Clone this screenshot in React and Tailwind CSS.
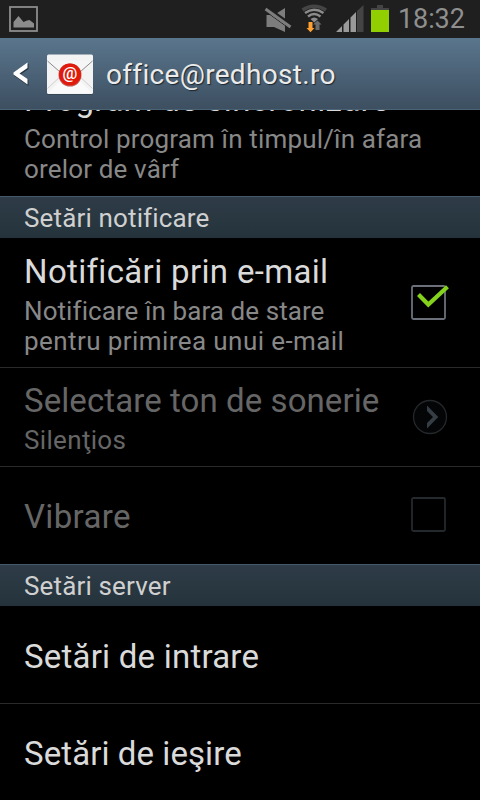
import React from "react";

const DISABLED = "text-[#666666]";
const ENABLED = "text-[#dadada]";

function StatusBar() {
  return (
    <div className="flex h-[38px] shrink-0 items-start bg-[#1f1f1f]">
      <svg className="mt-[6px] ml-[9px] shrink-0" width="29" height="26" viewBox="0 0 29 26">
        <rect x="1" y="1" width="27" height="24" fill="#1f1f1f" stroke="#8c8c8c" strokeWidth="1.800" />
        <path d="M4.500 21.500V16L9.500 10L14.500 16L18 14.500L20.500 14L25 17.500V21.500Z" fill="#8c8c8c" />
      </svg>
      <svg className="ml-auto shrink-0" width="132" height="38" viewBox="264 0 132 38">
        <path d="M266.500 15H274L285 8V32L274 27H266.500Z" fill="#7d7d7d" />
        <path d="M265 7L291 25.700" stroke="#1f1f1f" strokeWidth="4.500" />
        <path d="M265.500 11.300L290.500 29.300" stroke="#1f1f1f" strokeWidth="1" />
        <path d="M265.500 9L290.500 27" stroke="#7d7d7d" strokeWidth="3" />
        <path d="M302.500 10Q314 2.500 326 10" stroke="#454545" strokeWidth="3.500" fill="none" />
        <path d="M305 13Q314 6.500 323.500 13" stroke="#8c8c8c" strokeWidth="2.400" fill="none" />
        <path d="M308 16.500Q314 11.500 320.500 16.500" stroke="#8c8c8c" strokeWidth="2.400" fill="none" />
        <path d="M310.500 19Q314 16 318 19L314.300 22.500Z" fill="#8c8c8c" />
        <path d="M308.500 22H312.500V28H314.500L310.500 32.300L306.500 28H308.500Z" fill="#ffa030" />
        <path d="M315.500 30V24.500H313L317.500 20.500L321.500 24.500H319.500V30Z" fill="#6a6a6a" />
        <path d="M336 32L342 26V32ZM343.500 32V24.500L349 19V32ZM350.500 32V17.500L356 12V32Z" fill="#9a9a9a" />
        <path d="M357 32V11L363.500 5V32Z" fill="#444444" />
        <rect x="377" y="5" width="6" height="3" fill="#444444" />
        <rect x="371" y="8" width="18" height="2" fill="#444444" />
        <rect x="371" y="10" width="18" height="22" fill="#92cf00" />
      </svg>
      <span className="mt-[4px] mr-[16px] w-[68px] pl-[2px] text-[27px] leading-[30px] tracking-[-0.1px] whitespace-nowrap text-[#8f8f8f]">18:32</span>
    </div>
  );
}

function Header() {
  return (
    <div className="relative z-10 flex h-[72px] shrink-0 items-start border-b border-[#4b6474] bg-linear-to-b from-[#5a768d] to-[#3d4f61]">
      <svg className="shrink-0" width="106" height="71" viewBox="0 38 106 71">
        <path d="M28.500 63.500V69L20.500 74.500L28.500 80V86L14.500 76V73.500Z" fill="#26323e" />
        <path d="M27.500 62.500V68L19.500 73.500L27.500 79V84.500L13.500 74.500V72.500Z" fill="#ffffff" />
        <rect x="47" y="55" width="46" height="40" rx="1.500" fill="#33414e" opacity=".7" />
        <rect x="47" y="54.500" width="46" height="39.500" rx="1.500" fill="#f3f3f3" />
        <path d="M48 93L65 76H75L92 93Z" fill="#fafafa" />
        <path d="M47.500 88.500L62 75M92.500 88.500L78 75" stroke="#cfcfcf" strokeWidth="1" />
        <path d="M47.500 61L64 75.500Q70 80 76 75.500L92.500 61" stroke="#8c8c8c" strokeWidth="1" fill="#f6f6f6" />
        <circle cx="70" cy="75" r="11.500" fill="#aa1c12" opacity=".7" />
        <circle cx="70" cy="74.500" r="11" fill="#e01b0c" />
        <text x="69.900" y="78.700" textAnchor="middle" fontFamily="Roboto, sans-serif" fontSize="16.500" fontWeight="500" fill="#ffffff">@</text>
      </svg>
      <span className="mt-[19px] text-[28px] leading-[36px] tracking-[0.32px] whitespace-nowrap text-[#ebebeb] [text-shadow:1px_1px_1px_#1c2731]">office@redhost.ro</span>
    </div>
  );
}

function Section({ children }) {
  return (
    <div className="h-[42px] shrink-0 border-t border-[#46596a] bg-linear-to-b from-[#2f3c48] to-[#24333b] pt-[6px] pl-6 text-[26px] leading-[30px] tracking-[0.15px] whitespace-nowrap text-[#d0d0d0]">
      {children}
    </div>
  );
}

function Title({ children, className = "" }) {
  return <div className={`text-[33px] leading-[38px] whitespace-nowrap ${className}`}>{children}</div>;
}

function Summary({ children, className = "" }) {
  return <div className={`mt-[5px] text-[26px] leading-[30px] whitespace-nowrap ${className}`}>{children}</div>;
}

function Checkbox({ checked }) {
  return (
    <svg className="shrink-0" width="42" height="38" viewBox="0 0 42 38">
      <rect x="2" y="3" width="33" height="33" rx="1.500" fill="none" stroke={checked ? "#6b707a" : "#24292d"} strokeWidth="1.800" />
      {checked && <path d="M8.500 11.500L18.300 21.500L37.500 3.800" fill="none" stroke="#84d21c" strokeWidth="4.200" />}
    </svg>
  );
}

function Arrow() {
  return (
    <svg className="shrink-0" width="36" height="36" viewBox="0 0 36 36">
      <circle cx="18" cy="18" r="16.500" fill="#040507" stroke="#25282b" strokeWidth="1.300" />
      <path d="M15 6.500L26.300 18L15 29.500V24L21 18L15 12Z" fill="#353d45" />
    </svg>
  );
}

export default function App() {
  return (
    <div className="flex h-[800px] w-[480px] flex-col overflow-hidden bg-black font-['Roboto',sans-serif]">
      <StatusBar />
      <Header />
      <div className="flex min-h-0 flex-1 flex-col overflow-hidden">
        <div className="-mt-[29px] h-[115px] shrink-0 pl-6">
          <div className={ENABLED}><Title className="tracking-[0.32px]">Program de sincronizare</Title></div>
          <div className="text-[#888888]"><Summary className="tracking-[0.16px]">Control program în timpul/în afara<br />orelor de vârf</Summary></div>
        </div>
        <Section>Setări notificare</Section>
        <div className="flex h-[130px] shrink-0 border-b border-[#2a2a2a] pt-[15px] pl-6">
          <div className="w-[386px]">
            <div className={ENABLED}><Title className="tracking-[0.34px]">Notificări prin e-mail</Title></div>
            <div className="text-[#888888]">
              <Summary className="tracking-[0.08px]">Notificare în bara de stare<br /><span className="tracking-[0.42px]">pentru primirea unui e-mail</span></Summary>
            </div>
          </div>
          <div className="pt-[30px]"><Checkbox checked /></div>
        </div>
        <div className="flex h-[99px] shrink-0 border-b border-[#2a2a2a] pt-[14px] pl-6">
          <div className={`w-[388px] ${DISABLED}`}>
            <Title className="tracking-[0.08px]">Selectare ton de sonerie</Title>
            <Summary className="tracking-[0.33px]">Silenţios</Summary>
          </div>
          <div className="pt-[17px]"><Arrow /></div>
        </div>
        <div className="flex h-[97px] shrink-0 pl-6">
          <div className={`w-[386px] pt-[31px] ${DISABLED}`}><Title className="tracking-[0.35px]">Vibrare</Title></div>
          <div className="pt-[28px]"><Checkbox /></div>
        </div>
        <Section>Setări server</Section>
        <div className={`h-[98px] shrink-0 border-b border-[#2a2a2a] pt-[32px] pl-6 ${ENABLED}`}><Title className="tracking-[0.22px]">Setări de intrare</Title></div>
        <div className={`h-[96px] shrink-0 pt-[31px] pl-6 ${ENABLED}`}><Title className="tracking-[0.08px]">Setări de ieşire</Title></div>
      </div>
    </div>
  );
}
